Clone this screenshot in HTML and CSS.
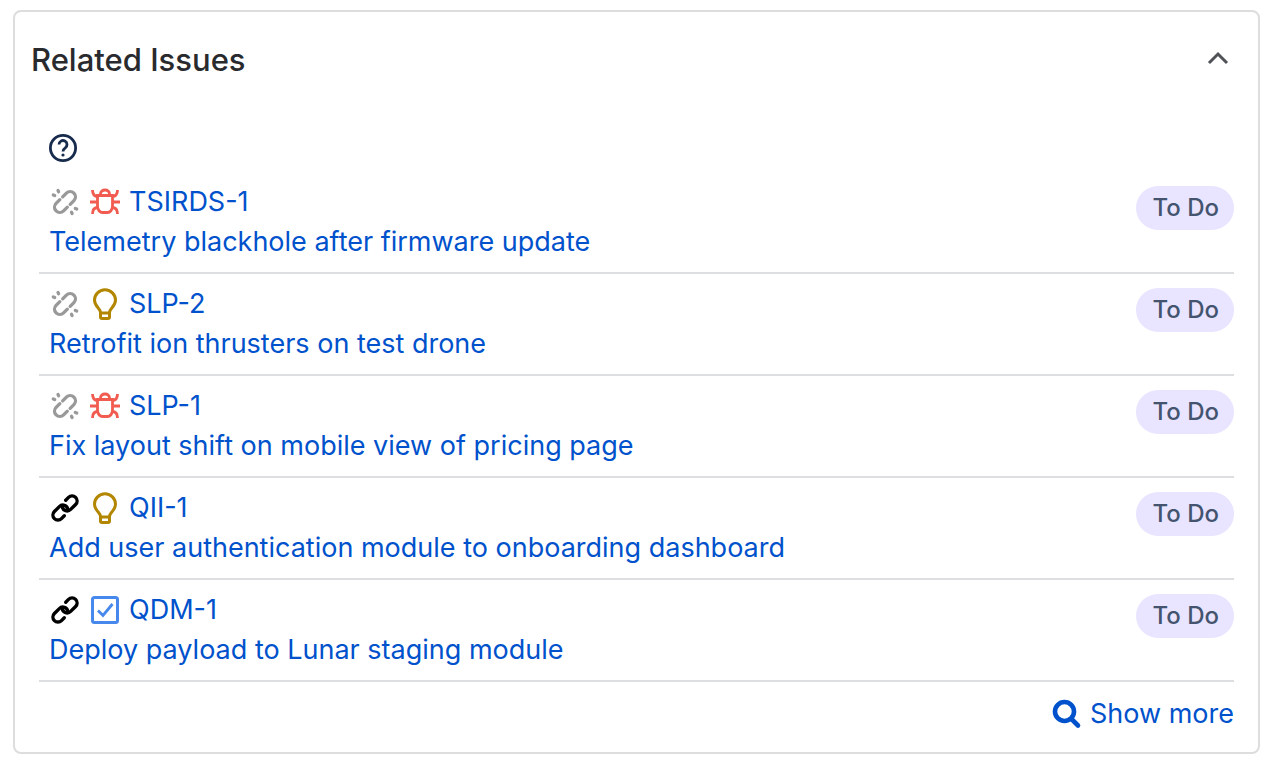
FILE: index.html
```html
<!DOCTYPE html>
<html lang="en">
<head>
    <meta charset="UTF-8">
    <meta name="viewport" content="width=device-width, initial-scale=1.0">
    <title>Related Issues</title>
    <link rel="stylesheet" href="styles.css">
</head>
<body>
    <!-- icon set -->
    <svg class="sprite" aria-hidden="true">
        <symbol id="unlink" viewBox="0 0 32 32">
            <g fill="none" stroke="#999" stroke-width="3.300" stroke-linecap="round" stroke-linejoin="round">
                <g transform="rotate(-45 16 16)">
                    <path d="M18 10.700h5.300a5.300 5.300 0 0 1 0 10.600H18"/>
                    <path d="M14 10.700H8.700a5.300 5.300 0 0 0 0 10.600H14"/>
                </g>
                <path d="M9 4.500l.6 1.200M4.300 9l1.400.6M22.500 26.300l.6 1.200M26.300 22.500l1.400.6"/>
            </g>
        </symbol>
        <symbol id="link" viewBox="0 0 32 32">
            <g fill="none" stroke="#000" stroke-width="3.400" stroke-linecap="round" stroke-linejoin="round" transform="rotate(-45 16 16)">
                <path d="M22 11h4a5 5 0 0 1 0 10h-7a5 5 0 0 1-4-8"/>
                <path d="M10 21H6a5 5 0 0 1 0-10h7a5 5 0 0 1 4 8"/>
            </g>
        </symbol>
        <symbol id="bug" viewBox="0 0 32 32">
            <g fill="none" stroke="#f15b50" stroke-width="2.800">
                <path d="M8.500 9.500h15V20c0 4-2.500 6.500-5 6.500h-5c-2.500 0-5-2.500-5-6.500z"/>
                <path d="M11.500 9.500V8c0-2.500 2-4 4.500-4s4.500 1.500 4.500 4v1.500"/>
                <path d="M1 16h7M24 16h7M3.500 4c0 4 2 6.500 5.500 6.500M28.500 4c0 4-2 6.500-5.500 6.500M3.500 28c0-4 2-6.500 5.500-6.500M28.500 28c0-4-2-6.500-5.500-6.500"/>
            </g>
        </symbol>
        <symbol id="bulb" viewBox="0 0 32 32">
            <g fill="none" stroke="#b38600" stroke-width="3" stroke-linejoin="round">
                <path d="M11.500 24.500c0-4-6-6-6-12.200a10.500 10.500 0 0 1 21 0c0 6.200-6 8.200-6 12.200V29q0 1.500-1.500 1.500h-6q-1.500 0-1.500-1.500z"/>
                <path d="M11.500 25h9"/>
            </g>
        </symbol>
        <symbol id="task" viewBox="0 0 32 32">
            <rect x="3.500" y="3.500" width="25" height="25" rx="2" fill="none" stroke="#4688ec" stroke-width="3"/>
            <path d="M9 16.500l5 5L23.500 10" fill="none" stroke="#4688ec" stroke-width="2.800"/>
        </symbol>
    </svg>

    <section class="panel">
        <div class="panel-header">
            <h2>Related Issues</h2>
            <button class="toggle" type="button" aria-label="Collapse">
                <svg class="icon" viewBox="0 0 32 32"><path d="M7 19l9-9 9 9" fill="none" stroke="#505258" stroke-width="3"/></svg>
            </button>
        </div>

        <div class="panel-body">
            <button class="help" type="button" aria-label="Help">
                <svg class="icon" viewBox="0 0 32 32">
                    <circle cx="16" cy="16" r="12.600" fill="none" stroke="#172b4d" stroke-width="2.800"/>
                    <path d="M12 12.500a4 4 0 1 1 6.300 3.300c-1.500 1-2.300 1.700-2.300 3.700" fill="none" stroke="#172b4d" stroke-width="2.800"/>
                    <circle cx="16" cy="23" r="1.600" fill="#172b4d"/>
                </svg>
            </button>

            <ul class="issues">
                <li class="issue">
                    <div class="issue-info">
                        <div class="issue-key">
                            <svg class="icon"><use href="#unlink"/></svg>
                            <svg class="icon"><use href="#bug"/></svg>
                            <a href="#">TSIRDS-1</a>
                        </div>
                        <a href="#">Telemetry blackhole after firmware update</a>
                    </div>
                    <span class="status">To Do</span>
                </li>
                <li class="issue">
                    <div class="issue-info">
                        <div class="issue-key">
                            <svg class="icon"><use href="#unlink"/></svg>
                            <svg class="icon"><use href="#bulb"/></svg>
                            <a href="#">SLP-2</a>
                        </div>
                        <a href="#">Retrofit ion thrusters on test drone</a>
                    </div>
                    <span class="status">To Do</span>
                </li>
                <li class="issue">
                    <div class="issue-info">
                        <div class="issue-key">
                            <svg class="icon"><use href="#unlink"/></svg>
                            <svg class="icon"><use href="#bug"/></svg>
                            <a href="#">SLP-1</a>
                        </div>
                        <a href="#">Fix layout shift on mobile view of pricing page</a>
                    </div>
                    <span class="status">To Do</span>
                </li>
                <li class="issue">
                    <div class="issue-info">
                        <div class="issue-key">
                            <svg class="icon"><use href="#link"/></svg>
                            <svg class="icon"><use href="#bulb"/></svg>
                            <a href="#">QII-1</a>
                        </div>
                        <a href="#">Add user authentication module to onboarding dashboard</a>
                    </div>
                    <span class="status">To Do</span>
                </li>
                <li class="issue">
                    <div class="issue-info">
                        <div class="issue-key">
                            <svg class="icon"><use href="#link"/></svg>
                            <svg class="icon"><use href="#task"/></svg>
                            <a href="#">QDM-1</a>
                        </div>
                        <a href="#">Deploy payload to Lunar staging module</a>
                    </div>
                    <span class="status">To Do</span>
                </li>
            </ul>

            <a class="show-more" href="#">
                <svg class="icon" viewBox="0 0 32 32">
                    <circle cx="14.500" cy="13.500" r="9.500" fill="none" stroke="#0052cc" stroke-width="4.600"/>
                    <path d="M22 21.500l6 6" fill="none" stroke="#0052cc" stroke-width="4.600" stroke-linecap="round"/>
                </svg>
                Show more
            </a>
        </div>
    </section>
</body>
</html>
```

FILE: styles.css
```css
body {
    margin: 0;
    padding: 10px 14px 12px 13px;
    font-family: Inter, "Liberation Sans", sans-serif;
    font-size: 27px;
    line-height: 40px;
    background: #fff;
}
a {
    color: #0052cc;
    text-decoration: none;
}
a:hover {
    text-decoration: underline;
}
button {
    display: flex;
    padding: 0;
    border: none;
    background: none;
    cursor: pointer;
}
.sprite {
    display: none;
}
.icon {
    display: block;
    width: 32px;
    height: 32px;
    flex: none;
}
.panel {
    border: 2px solid #ddd;
    border-radius: 8px;
}
.panel-header {
    display: flex;
    align-items: center;
    justify-content: space-between;
    padding: 28px 24px 0 16px;
}
.panel-header h2 {
    margin: 0;
    font-size: 31px;
    font-weight: 500;
    line-height: 40px;
    color: #292a2e;
}
.panel-body {
    padding: 52px 24px 18px;
}
.help {
    margin: 0 0 8px 8px;
}
.issues {
    margin: 0;
    padding: 0;
    list-style: none;
}
.issue {
    display: flex;
    align-items: flex-start;
    justify-content: space-between;
    padding: 10px 0 10px 10px;
    border-bottom: 2px solid #dddee1;
}
.issue-key {
    display: flex;
    align-items: center;
    gap: 8px;
}
.status {
    flex: none;
    margin-top: 4px;
    padding: 0 15px 0 16px;
    border-radius: 22px;
    background: #e9e4ff;
    color: #44546f;
    font-size: 24px;
    font-weight: 500;
    line-height: 44px;
}
.show-more {
    display: flex;
    align-items: center;
    justify-content: flex-end;
    gap: 8px;
    padding-top: 12px;
}
```
